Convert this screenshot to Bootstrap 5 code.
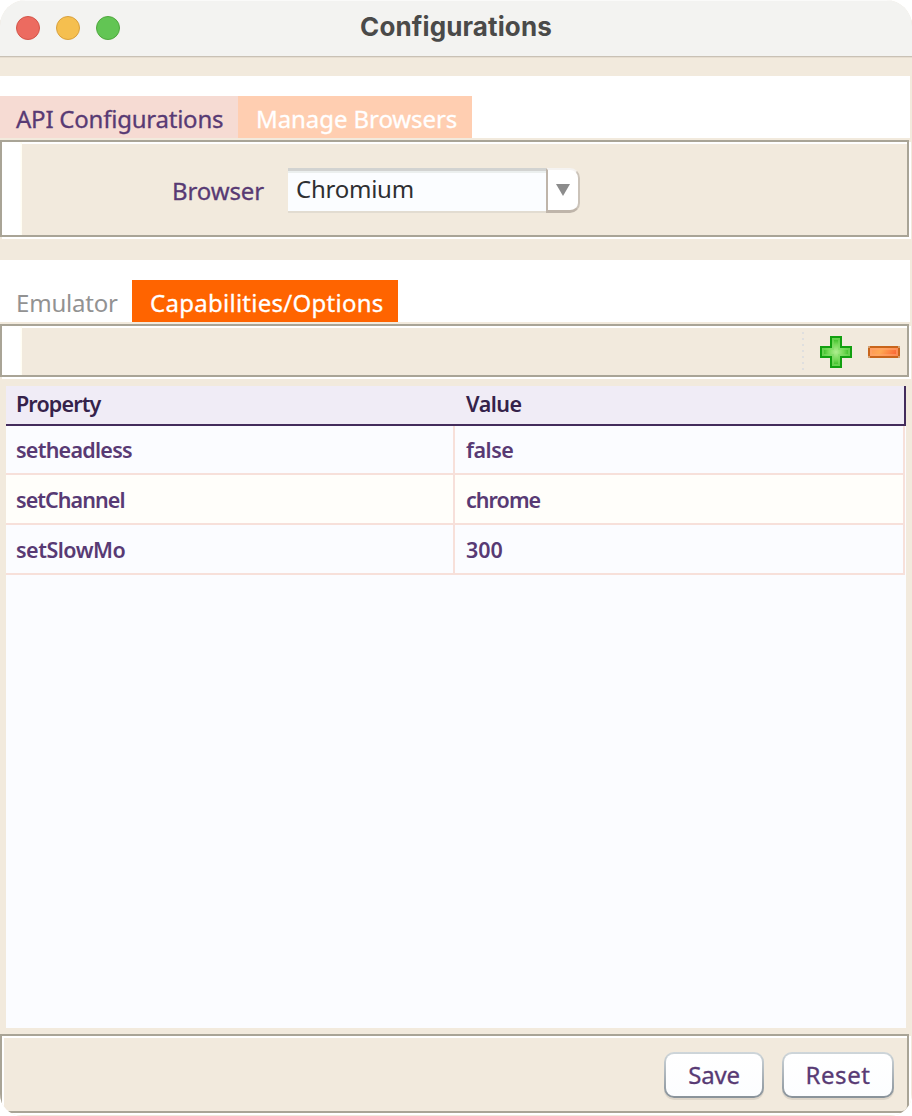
<!DOCTYPE html>
<html lang="en">
<head>
<meta charset="utf-8">
<meta name="viewport" content="width=device-width, initial-scale=1">
<title>Configurations</title>
<link rel="stylesheet" href="https://cdn.jsdelivr.net/npm/bootstrap@5.3.0/dist/css/bootstrap.min.css">
<style>
:root{--sand:#f2eadd;--line:#a9a496;--plum:#583a74}
body{background:#fff;font-family:"Noto Sans","Open Sans",sans-serif;font-size:24px;font-weight:400;line-height:1;color:var(--plum);overflow:hidden}
.window{width:912px;height:1116px;background:var(--sand);border-radius:26px 26px 22px 22px;overflow:hidden}
.titlebar{height:57px;background:#f3f3f1;border-bottom:1px solid #c9c1b5;border-top:1px solid #fafaf9;box-shadow:0 1px 0 #e6ddd0}
.lights{left:16px;top:15px;gap:16px}
.light{width:24px;height:24px;border-radius:50%;border:1px solid}
.light-r{background:#ec6b60;border-color:#d35549}
.light-y{background:#f5bf4f;border-color:#d8a03d}
.light-g{background:#62c554;border-color:#4fa73e}
.caption-text{font-family:Inter,sans-serif;font-weight:700;font-size:26px;color:#4a4a49;line-height:52px;letter-spacing:.12px}
.tabstrip{width:910px;height:62px;background:#fff}
.strip-main{margin-top:19px}
.strip-sub{margin-top:23px}
.tabstrip .nav-link{height:42px;border-radius:0;padding:0;line-height:46px;color:inherit;white-space:nowrap}
.tab-api{width:238px;padding-left:16px!important;background:#f6dbd3;letter-spacing:-.23px}
.tab-manage{width:234px;padding-left:18px!important;background:#ffceb1;color:#fff!important;letter-spacing:-.08px}
.tab-emu{width:132px;padding-left:16px!important;color:#929292!important;letter-spacing:-.2px}
.tab-cap{width:266px;padding-left:18px!important;background:#ff6400;color:#fff!important;letter-spacing:.27px}
.panel{width:909px;border:2px solid var(--line);box-shadow:2px 2px 0 #fff,inset 0 2px 0 #fff}
.panel-browser{margin-top:2px;height:97px}
.panel-tools{margin-top:2px;height:53px}
.grip{width:20px;background:linear-gradient(90deg,#fff 88%,#fffdf0)}
.browser-label{width:116px;margin-left:150px;line-height:98px;letter-spacing:-.13px}
.combo{margin-top:26px}
.field{width:258px;height:45px;background:#fbfdff;border-top:3px solid #d2d3d1;border-bottom:2px solid #e2dcd1;padding-left:8px;line-height:36px;color:#2e2f31;letter-spacing:-.25px;box-shadow:inset 0 2px 0 #ebefee}
.drop{width:34px;height:45px;background:#fff;border:2px solid #bfb5aa;border-top-color:#f5f3f1;border-right-color:#cbc3b9;border-bottom-width:3px;border-radius:0 10px 10px 0}
.tools{padding-right:7px}
.dots{width:2px;height:38px;margin:6px 16px 0 0;background:repeating-linear-gradient(#dfdfdf 0 2px,transparent 2px 6px)}
.ico-add{margin-top:10px}
.ico-del{margin:20px 0 0 16px}
.sheet{width:900px;height:642px;margin:9px 0 0 6px;background:#fbfcff;font-size:21.5px;font-weight:600;letter-spacing:-.5px}
.sheet-head{height:40px;background:#f0ecf6;border-bottom:2px solid #432c5c;border-right:2px solid #432c5c;color:#35224a;line-height:36px}
.cell-a{width:449px;padding-left:10px;border-right:2px solid #f7e0da}
.sheet-head .cell-a{border-color:transparent}
.cell-b{padding-left:11px}
.sheet-row{width:899px;height:50px;line-height:50px;border-bottom:2px solid #f7e0da;border-right:2px solid #f7e0da}
.sheet-row.first{height:49px;line-height:48px}
.sheet-row.alt{background:#fffefa}
.fit-prop{letter-spacing:-.75px}
.fit-head{letter-spacing:-.85px}
.fit-chan{letter-spacing:-.95px}
.fit-chrome{letter-spacing:-.95px}
.fit-num{letter-spacing:0}
.footbar{height:79px;margin-top:6px;border-radius:0 0 7px 7px;padding:16px 13px 0 0;gap:18px;box-shadow:2px 2px 0 #fff,inset 2px 2px 0 #fff}
.btn-soft{width:100px;height:46px;padding:0;border:2px solid transparent;border-radius:10px;background:linear-gradient(#fff,#fcfdff) padding-box,linear-gradient(#cfd6da,#889199) border-box;box-shadow:0 2px 0 #ddd5c9;font-size:24px;font-weight:400;line-height:42px;color:var(--plum);letter-spacing:-.2px}
.btn-reset{width:112px;letter-spacing:.6px}
.txt{display:inline-block;white-space:nowrap}
.tab-api,.tab-manage,.tab-cap,.browser-label,.btn-soft .txt{-webkit-text-stroke:.3px currentColor}
</style>
</head>
<body>
<div class="window d-flex flex-column">
  <header class="titlebar position-relative text-center flex-shrink-0">
    <div class="lights position-absolute d-flex"><span class="light light-r"></span><span class="light light-y"></span><span class="light light-g"></span></div>
    <span class="caption-text txt">Configurations</span>
  </header>
  <nav class="tabstrip strip-main nav align-items-end flex-nowrap flex-shrink-0">
    <a class="nav-link tab-api"><span class="txt">API Configurations</span></a>
    <a class="nav-link tab-manage"><span class="txt">Manage Browsers</span></a>
  </nav>
  <section class="panel panel-browser d-flex flex-shrink-0">
    <div class="grip"></div>
    <label class="txt browser-label">Browser</label>
    <div class="combo d-flex">
      <div class="field"><span class="txt">Chromium</span></div>
      <div class="drop d-flex justify-content-center align-items-center"><svg width="14" height="12"><path d="M0 0h14L7 12z" fill="#8c8c8c"/></svg></div>
    </div>
  </section>
  <nav class="tabstrip strip-sub nav align-items-end flex-nowrap flex-shrink-0">
    <a class="nav-link tab-emu"><span class="txt">Emulator</span></a>
    <a class="nav-link tab-cap"><span class="txt">Capabilities/Options</span></a>
  </nav>
  <section class="panel panel-tools d-flex flex-shrink-0">
    <div class="grip"></div>
    <div class="tools d-flex ms-auto">
      <div class="dots"></div>
      <svg class="ico-add" width="32" height="32" viewBox="0 0 32 32">
        <defs><radialGradient id="g"><stop stop-color="#b0ee91"/><stop offset=".5" stop-color="#76da59"/><stop offset=".85" stop-color="#3fc02a"/><stop offset="1" stop-color="#55cc40"/></radialGradient>
        <linearGradient id="o" x2="1" y2=".2"><stop stop-color="#ff9457"/><stop offset=".45" stop-color="#ffa954"/><stop offset="1" stop-color="#fb6734"/></linearGradient></defs>
        <path d="M11 1h10v10h10v10H21v10H11V21H1V11h10z" fill="url(#g)" stroke="#12a010" stroke-width="2"/>
        <path d="M3 19v-6h10V3h6v10h10v6H19v10h-6V19z" fill="none" stroke="#7fdc66" stroke-opacity=".6" stroke-width="2"/>
      </svg>
      <svg class="ico-del" width="32" height="12" viewBox="0 0 32 12"><rect x="1" y="1" width="30" height="10" fill="url(#o)" stroke="#c9651b" stroke-width="2"/><path d="M3 3h26v6H3z" fill="none" stroke="#ffa36c" stroke-opacity=".6" stroke-width="2"/><path d="M0 0h2v2H0zM30 0h2v2h-2zM0 10h2v2H0zM30 10h2v2h-2z" fill="#d6a070"/></svg>
    </div>
  </section>
  <main class="sheet flex-shrink-0">
    <div class="sheet-head d-flex"><div class="cell-a"><span class="txt fit-head">Property</span></div><div class="cell-b"><span class="txt">Value</span></div></div>
    <div class="sheet-row first d-flex"><div class="cell-a"><span class="txt fit-prop">setheadless</span></div><div class="cell-b"><span class="txt">false</span></div></div>
    <div class="sheet-row alt d-flex"><div class="cell-a"><span class="txt fit-chan">setChannel</span></div><div class="cell-b"><span class="txt fit-chrome">chrome</span></div></div>
    <div class="sheet-row d-flex"><div class="cell-a"><span class="txt">setSlowMo</span></div><div class="cell-b"><span class="txt fit-num">300</span></div></div>
  </main>
  <footer class="panel footbar d-flex justify-content-end flex-shrink-0">
    <button class="btn btn-soft"><span class="txt">Save</span></button>
    <button class="btn btn-soft btn-reset"><span class="txt">Reset</span></button>
  </footer>
</div>
<script src="https://cdn.jsdelivr.net/npm/bootstrap@5.3.0/dist/js/bootstrap.bundle.min.js"></script>
</body>
</html>
